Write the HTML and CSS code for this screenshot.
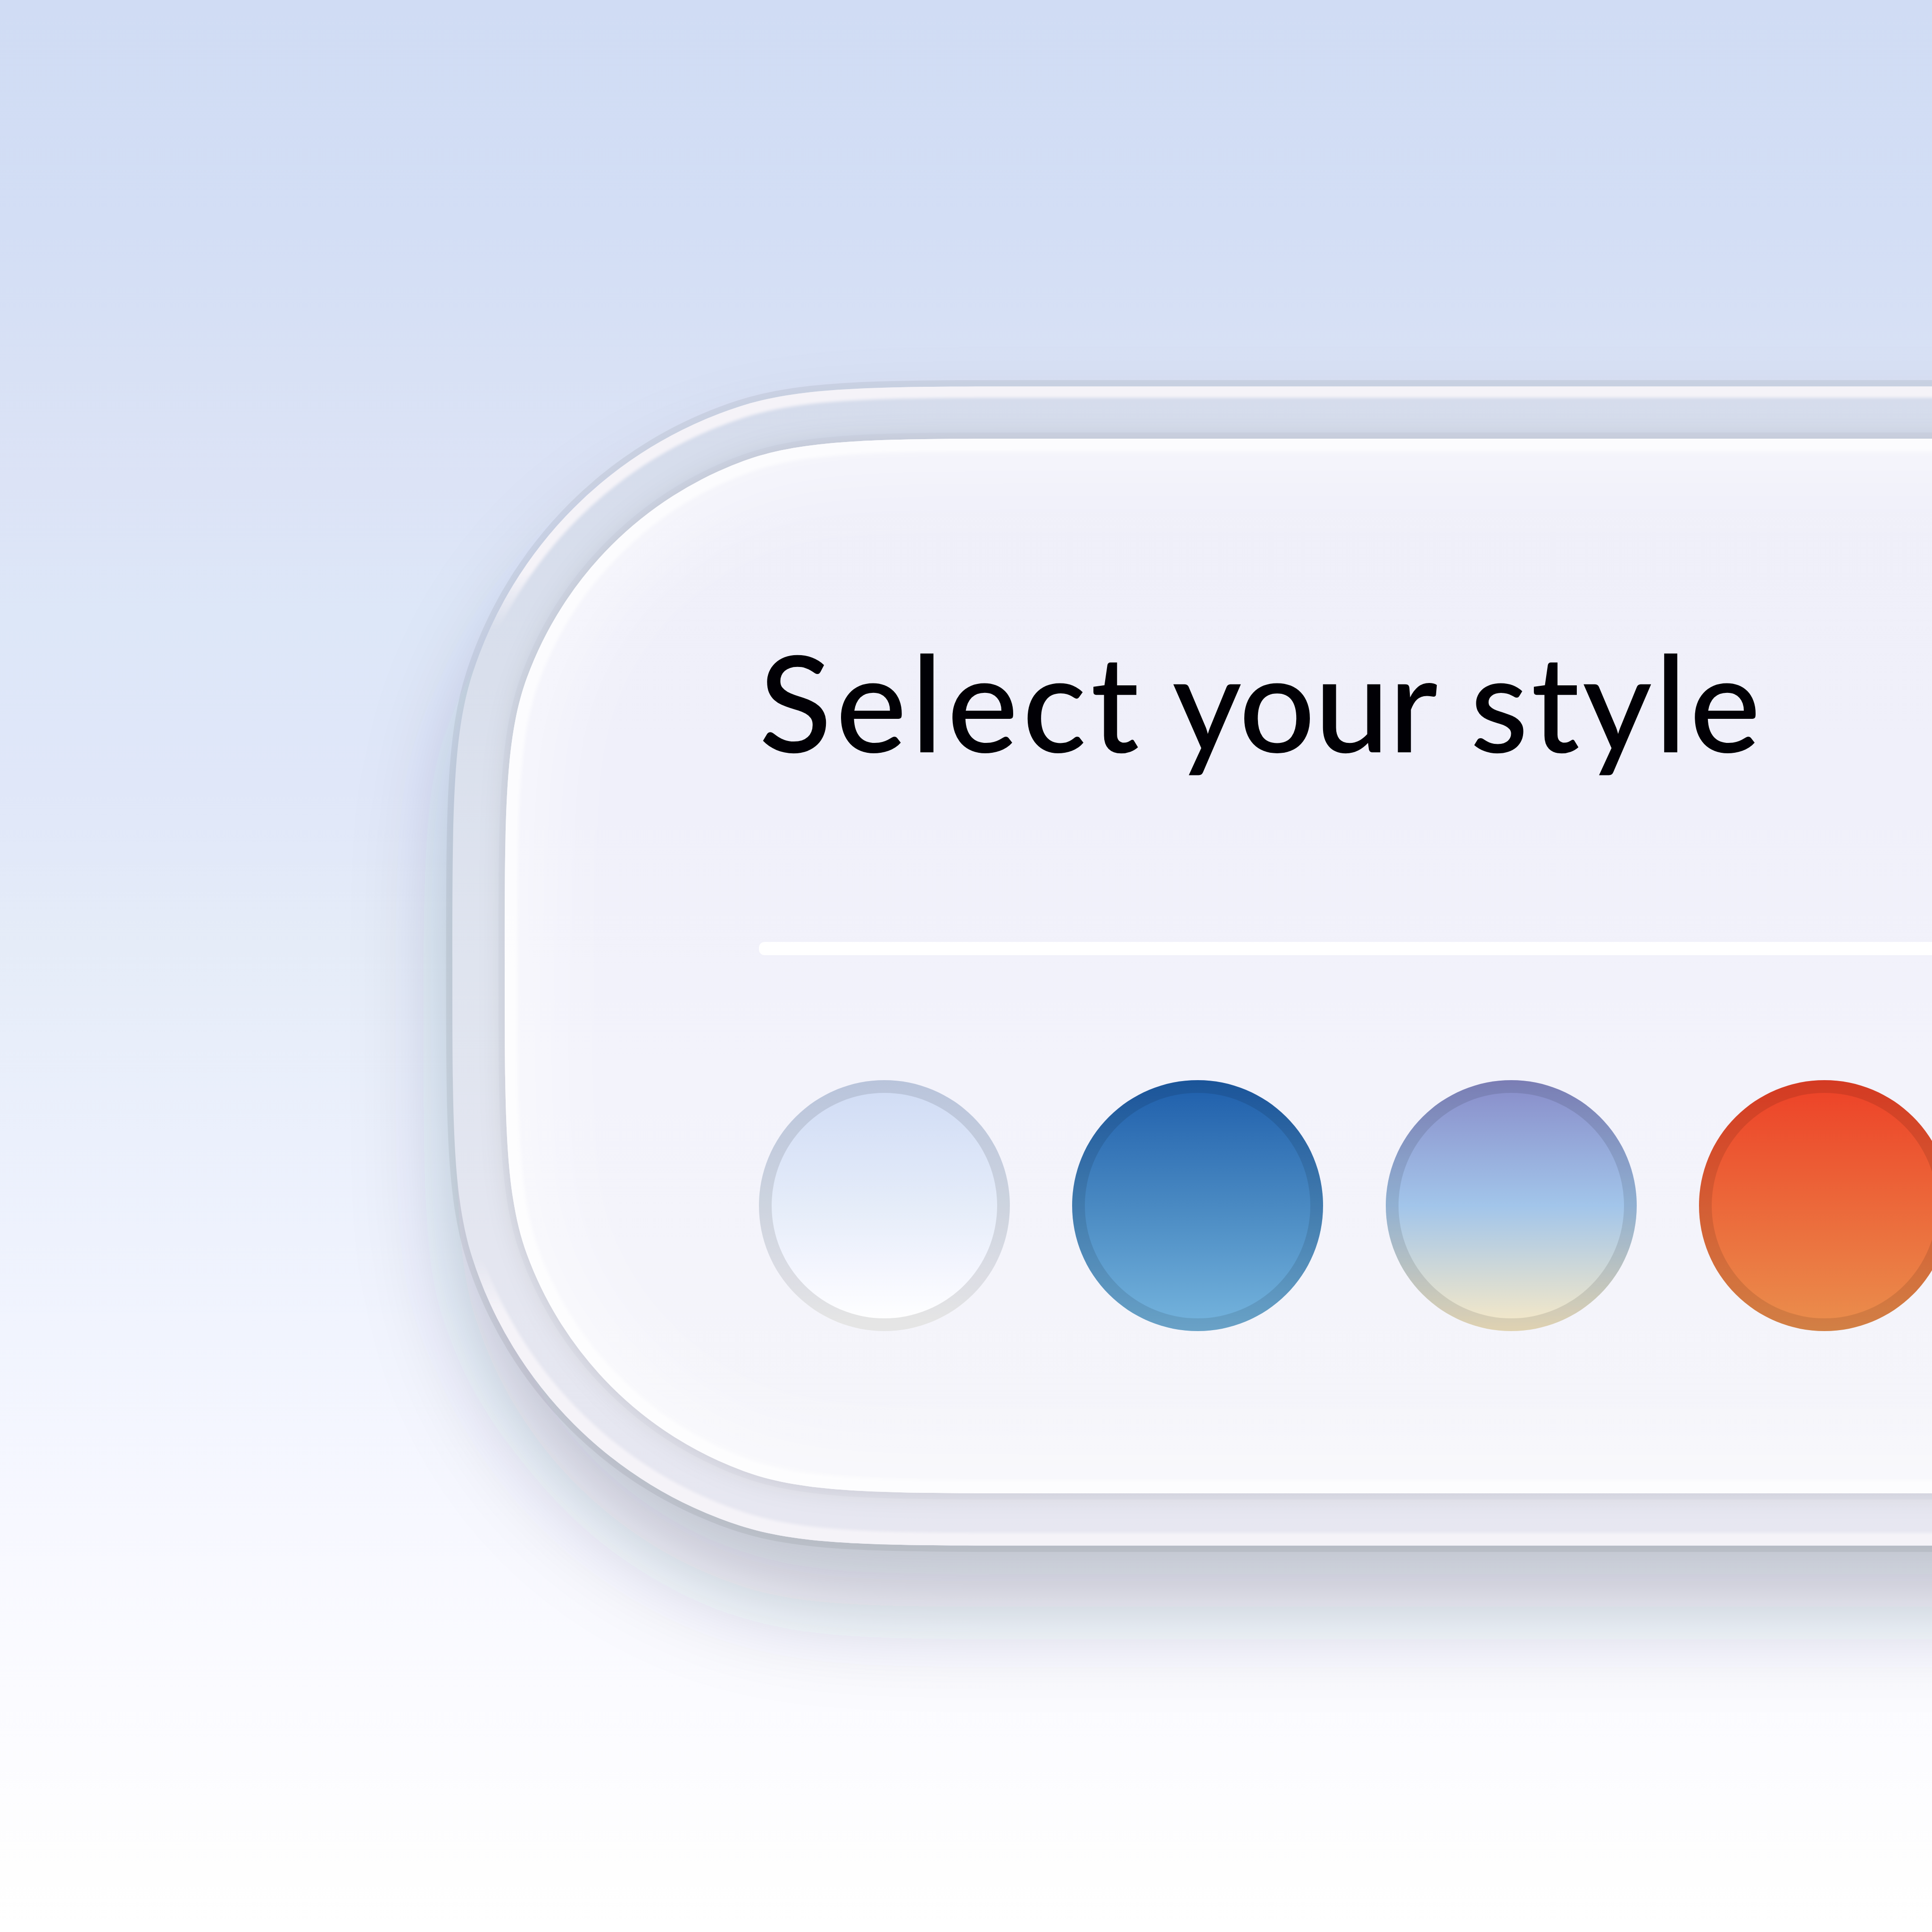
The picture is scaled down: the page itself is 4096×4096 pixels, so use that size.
FILE: index.html
```
<!DOCTYPE html>
<html lang="en">
<head>
    <meta charset="UTF-8">
    <meta name="viewport" content="width=device-width, initial-scale=1.0">
    <title>Style Picker</title>
    <link rel="stylesheet" href="styles.css">
</head>
<body>
    <div class="page">
        <!-- Glass frame and card with smooth corners -->
        <svg class="frame" viewBox="0 0 4100 4100" aria-hidden="true">
            <defs>
                <path id="outer" d="M4700 820H2190c-325.7 0-488.5 0-620.4 42.6a880 880 0 0 0-567 567c-42.6 131.9-42.6 294.7-42.6 620.4c0 325.7 0 488.5 42.6 620.4a880 880 0 0 0 567 567c131.9 42.6 294.7 42.6 620.4 42.6H4700z"/>
                <path id="inner" d="M4700 931H2190c-322.1 0-483.2 0-612.1 47.3a773 773 0 0 0-459.6 459.6c-47.3 128.9-47.3 290-47.3 612.1c0 322.1 0 483.2 47.3 612.1a773 773 0 0 0 459.6 459.6c128.9 47.3 290 47.3 612.1 47.3H4700z"/>
                <clipPath id="outerClip"><use href="#outer"/></clipPath>
                <clipPath id="innerClip"><use href="#inner"/></clipPath>

                <linearGradient id="glass" gradientUnits="userSpaceOnUse" x1="0" y1="820" x2="0" y2="3280">
                    <stop offset="0" stop-color="#d5dcec"/>
                    <stop offset="0.25" stop-color="#d9dfec"/>
                    <stop offset="0.5" stop-color="#dfe4ef"/>
                    <stop offset="0.75" stop-color="#e4e6f0"/>
                    <stop offset="1" stop-color="#e7e7f1"/>
                </linearGradient>
                <linearGradient id="cardFill" gradientUnits="userSpaceOnUse" x1="0" y1="931" x2="0" y2="3169">
                    <stop offset="0" stop-color="#efeff9"/>
                    <stop offset="0.35" stop-color="#f0f0fa"/>
                    <stop offset="0.6" stop-color="#f3f3fb"/>
                    <stop offset="1" stop-color="#f5f5fa"/>
                </linearGradient>
                <linearGradient id="fade" gradientUnits="userSpaceOnUse" x1="0" y1="820" x2="0" y2="3280">
                    <stop offset="0.16" stop-color="#fff"/>
                    <stop offset="0.21" stop-color="#000"/>
                    <stop offset="0.75" stop-color="#000"/>
                    <stop offset="0.8" stop-color="#fff"/>
                </linearGradient>

                <filter id="shadow" filterUnits="userSpaceOnUse" x="300" y="300" width="5000" height="3800"><feGaussianBlur stdDeviation="104"/></filter>
                <filter id="blurLarge" filterUnits="userSpaceOnUse" x="600" y="500" width="4500" height="3200"><feGaussianBlur stdDeviation="78"/></filter>
                <filter id="blurMedium" filterUnits="userSpaceOnUse" x="600" y="500" width="4500" height="3200"><feGaussianBlur stdDeviation="28"/></filter>
                <filter id="blurSmall" filterUnits="userSpaceOnUse" x="600" y="500" width="4500" height="3200"><feGaussianBlur stdDeviation="3"/></filter>

                <mask id="rimTop" maskUnits="userSpaceOnUse" x="600" y="500" width="4500" height="3200">
                    <rect x="600" y="500" width="4500" height="3200" fill="url(#fade)"/>
                    <use href="#outer" x="8" y="24" fill="#000" filter="url(#blurSmall)"/>
                    <rect x="600" y="2050" width="4500" height="1700" fill="#000"/>
                </mask>
                <mask id="rimBottom" maskUnits="userSpaceOnUse" x="600" y="500" width="4500" height="3200">
                    <rect x="600" y="500" width="4500" height="3200" fill="url(#fade)"/>
                    <use href="#outer" x="13" y="-27" fill="#000" filter="url(#blurSmall)"/>
                    <rect x="600" y="500" width="4500" height="1550" fill="#000"/>
                </mask>
            </defs>

            <!-- drop shadow -->
            <g filter="url(#shadow)">
                <use href="#outer" fill="#20344f" fill-opacity="0.27" transform="translate(8 143) scale(1 0.996)"/>
            </g>
            <use href="#outer" fill="none" stroke="#000" stroke-opacity="0.06" stroke-width="26.7"/>

            <!-- glass frame -->
            <use href="#outer" fill="url(#glass)"/>
            <g clip-path="url(#outerClip)">
                <use href="#inner" fill="#1e2832" fill-opacity="0.11" filter="url(#blurMedium)"/>
                <use href="#inner" fill="none" stroke="#000" stroke-opacity="0.02" stroke-width="26.7"/>
            </g>
            <use href="#outer" fill="#f5f3f8" mask="url(#rimTop)"/>
            <use href="#outer" fill="#f5f3f8" mask="url(#rimBottom)"/>

            <!-- card -->
            <use href="#inner" fill="url(#cardFill)"/>
            <g clip-path="url(#innerClip)">
                <use href="#inner" fill="none" stroke="#fff" stroke-opacity="0.52" stroke-width="160" filter="url(#blurLarge)"/>
                <use href="#inner" fill="none" stroke="#fff" stroke-opacity="0.7" stroke-width="54" filter="url(#blurSmall)"/>
            </g>
        </svg>

        <section class="panel">
            <h1 class="title">
                <span class="word select">Select</span>
                <span class="word your">your</span>
                <span class="word style">style</span>
            </h1>
            <div class="divider"></div>
            <div class="swatches">
                <button type="button" class="swatch mist" aria-label="Mist"></button>
                <button type="button" class="swatch ocean" aria-label="Ocean"></button>
                <button type="button" class="swatch dusk" aria-label="Dusk"></button>
                <button type="button" class="swatch ember" aria-label="Ember"></button>
            </div>
        </section>
    </div>
</body>
</html>
```
FILE: styles.css
```
body {
    margin: 0;
    font-family: Lato, sans-serif;
}

.page {
    position: relative;
    width: 4096px;
    height: 4096px;
    overflow: hidden;
    background: linear-gradient(
        #d0dcf4 0%,
        #d3def5 12%,
        #d8e1f5 19%,
        #dce3f6 25%,
        #dde7f8 32%,
        #e0e7f9 41%,
        #e5ecf8 49%,
        #ebf0fc 59%,
        #f1f4fe 69%,
        #f7f8ff 79%,
        #fbfbff 88%,
        #fefefe 97%,
        #ffffff 100%
    );
}

.frame {
    position: absolute;
    top: 0;
    left: 0;
    width: 4096px;
    height: 4096px;
}

.panel {
    position: relative;
    display: flex;
    flex-direction: column;
    box-sizing: border-box;
    width: 4000px;
    height: 3166px;
    padding: 1315px 0 0 1609px;
}

.title {
    display: flex;
    height: 682px;
    margin: 0;
    font-size: 284px;
    font-weight: 500;
    line-height: 340px;
    color: #010005;
    white-space: nowrap;
}

.select {
    margin-right: 61px;
    letter-spacing: 9px;
}

.your {
    margin-right: 70px;
    letter-spacing: -1.5px;
}

.style {
    letter-spacing: 6px;
}

.divider {
    flex: none;
    width: 2700px;
    height: 28px;
    border-radius: 12px;
    background-color: #fff;
}

.swatches {
    display: flex;
    gap: 132.3px;
    margin-top: 265px;
}

.swatch {
    flex: none;
    width: 532px;
    height: 532px;
    padding: 0;
    border: none;
    border-radius: 50%;
    box-shadow: inset 0 0 0 27px rgba(0, 0, 0, 0.1);
    cursor: pointer;
}

.mist {
    background: linear-gradient(#cfdbf4, #dde6f8 33%, #e6edf9 52%, #f3f5fe 74%, #ffffff 96%);
}

.ocean {
    background: linear-gradient(#1e5eab, #4b8bc3 52%, #76b5de);
}

.dusk {
    background: linear-gradient(#888cc9, #a2c5ea 50%, #f9eac6);
}

.ember {
    background: linear-gradient(#ed4127, #ea8f4d);
}
```
